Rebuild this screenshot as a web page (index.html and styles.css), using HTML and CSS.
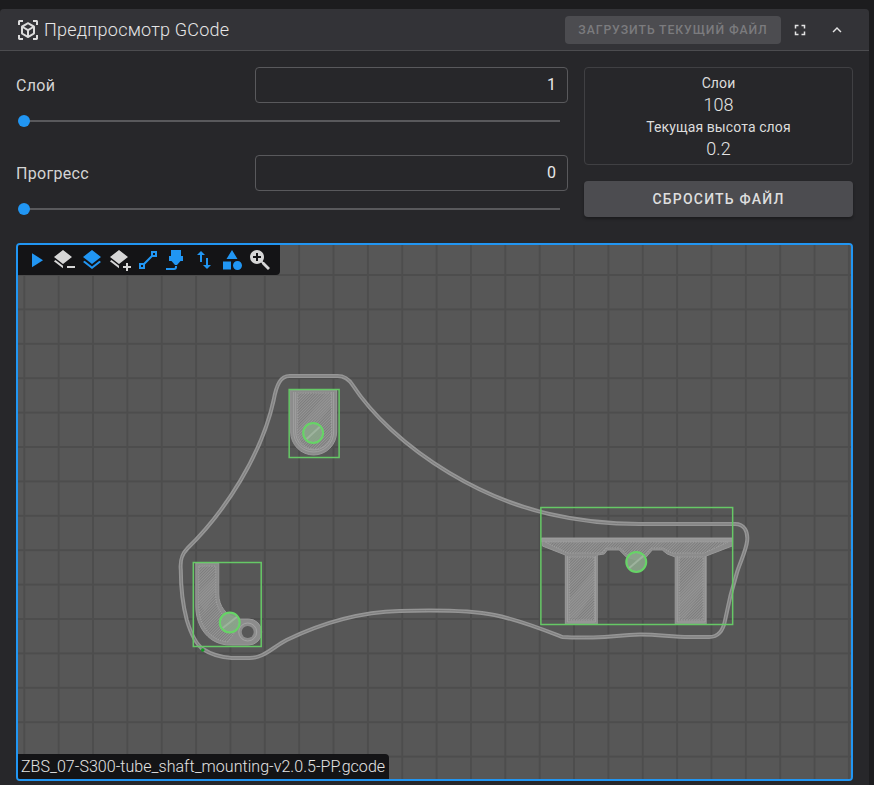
FILE: index.html
```html
<!DOCTYPE html>
<html lang="ru">
<head>
<meta charset="utf-8">
<title>Предпросмотр GCode</title>
<link rel="stylesheet" href="styles.css">
</head>
<body>
<section class="card">
  <header class="card-head">
    <svg class="head-icon" viewBox="0 0 24 24"><path d="M17,22V20H20V17H22V20.5C22,20.89 21.84,21.24 21.54,21.54C21.24,21.84 20.89,22 20.5,22H17M7,22H3.5C3.11,22 2.76,21.84 2.46,21.54C2.16,21.24 2,20.89 2,20.5V17H4V20H7V22M17,2H20.5C20.89,2 21.24,2.16 21.54,2.46C21.84,2.76 22,3.11 22,3.5V7H20V4H17V2M7,2V4H4V7H2V3.5C2,3.11 2.16,2.76 2.46,2.46C2.76,2.16 3.11,2 3.5,2H7M13,17.25L17,14.95V10.36L13,12.65V17.25M12,10.92L16,8.63L12,6.28L8,8.63L12,10.92M7,14.95L11,17.25V12.65L7,10.36V14.95M18.23,7.59C18.73,7.91 19,8.34 19,8.91V15.23C19,15.8 18.73,16.23 18.23,16.55L12.75,19.73C12.25,20.05 11.75,20.05 11.25,19.73L5.77,16.55C5.27,16.23 5,15.8 5,15.23V8.91C5,8.34 5.27,7.91 5.77,7.59L11.25,4.41C11.5,4.28 11.75,4.22 12,4.22C12.25,4.22 12.5,4.28 12.75,4.41L18.23,7.59Z"/></svg>
    <h1 class="card-title">Предпросмотр GCode</h1>
    <button class="btn-load" type="button">Загрузить текущий файл</button>
    <span class="head-action"><svg class="small-icon" viewBox="0 0 24 24"><path d="M5,5H10V7H7V10H5V5M14,5H19V10H17V7H14V5M17,14H19V19H14V17H17V14M10,17V19H5V14H7V17H10Z"/></svg></span>
    <span class="head-action"><svg class="small-icon" viewBox="0 0 24 24"><path d="M7.41,15.41L12,10.83L16.59,15.41L18,14L12,8L6,14L7.41,15.41Z"/></svg></span>
  </header>

  <div class="card-body">
    <div class="controls">
      <div class="sliders">
        <div class="slider-block">
          <div class="slider-top"><span class="slider-label">Слой</span><div class="field">1</div></div>
          <div class="track"><span class="thumb"></span></div>
        </div>
        <div class="slider-block">
          <div class="slider-top"><span class="slider-label">Прогресс</span><div class="field">0</div></div>
          <div class="track"><span class="thumb"></span></div>
        </div>
      </div>
      <div class="side">
        <div class="stats">
          <div class="stat-name">Слои</div>
          <div class="stat-value">108</div>
          <div class="stat-name">Текущая высота слоя</div>
          <div class="stat-value">0.2</div>
        </div>
        <button class="btn-reset" type="button">Сбросить файл</button>
      </div>
    </div>

    <div class="viewer">
      <svg class="canvas" viewBox="18 245 834 534" preserveAspectRatio="none">
        <defs>
          <pattern id="grid" patternUnits="userSpaceOnUse" x="24.3" y="275" width="34.4" height="34.4">
            <rect class="grid-bg" width="34.4" height="34.4"/>
            <rect class="grid-line" x="-1" width="2" height="34.4"/>
            <rect class="grid-line" x="33.4" width="2" height="34.4"/>
            <rect class="grid-line" y="-1" width="34.4" height="2"/>
            <rect class="grid-line" y="33.4" width="34.4" height="2"/>
          </pattern>
          <pattern id="hatch" patternUnits="userSpaceOnUse" width="2" height="2" patternTransform="rotate(-45)">
            <rect class="hatch-bg" width="2" height="2"/>
            <rect class="hatch-line" width="2" height="1"/>
          </pattern>
        </defs>
        <rect fill="url(#grid)" x="18" y="245" width="834" height="534"/>

        <path class="skirt" d="M290 376H338C345 376 349 379 353 385C372 414 405 446 450 473C485 494 515 506 550 514C585 522 610 524 640 524H736C745 524 749 531 748 541C747 550 742 560 738 572C733 588 729 604 726 620C724 631 719 637 710 637H690C670 637 650 633 630 635C610 637 580 638 563 637C545 630 520 620 495 615C470 610 435 610 400 611C360 612 320 624 287 640C272 648 264 658 250 658H232C218 657 209 653 203 649C196 644 190 630 187 620C183 605 181 585 181 570C180 560 182 554 188 548C225 512 262 455 274 400C277 384 281 376 290 376Z"/>
        <path class="skirt-inner" d="M290 376H338C345 376 349 379 353 385C372 414 405 446 450 473C485 494 515 506 550 514C585 522 610 524 640 524H736C745 524 749 531 748 541C747 550 742 560 738 572C733 588 729 604 726 620C724 631 719 637 710 637H690C670 637 650 633 630 635C610 637 580 638 563 637C545 630 520 620 495 615C470 610 435 610 400 611C360 612 320 624 287 640C272 648 264 658 250 658H232C218 657 209 653 203 649C196 644 190 630 187 620C183 605 181 585 181 570C180 560 182 554 188 548C225 512 262 455 274 400C277 384 281 376 290 376Z"/>

        <!-- top part -->
        <path class="part" d="M291 390H337V432A23 23 0 0 1 291 432Z"/>
        <path class="part-line" d="M294 392V432A20 20 0 0 0 334 432V392M296 392V432A18 18 0 0 0 332 432V392"/>
        <path class="part-fill" d="M298 393H332V432A17 17 0 0 1 298 432Z"/>
        <path class="sheen" d="M332 393V406L306 440H299V428L326 393Z"/>
        <rect class="bbox" x="289.500" y="389.500" width="50" height="68"/>
        <circle class="pin-glow" cx="313.500" cy="433" r="9.500"/>
        <circle class="pin" cx="313.500" cy="433" r="10"/>
        <path class="pin-slash" d="M307 439L320 427"/>

        <!-- left part -->
        <path class="part" d="M196 563H219V594C219 606 226 616 240 619H249A13 13 0 0 1 249 645H230C210 645 196 628 196 606Z"/>
        <path class="part-fill" d="M199 566H216V596C216 610 226 622 240 625L228 642C210 640 199 625 199 606Z"/>
        <path class="sheen" d="M216 575V592L205 612L200 604V590Z"/>
        <circle class="hole-ring" cx="248" cy="632" r="9"/>
        <circle class="hole" cx="248" cy="632" r="6"/>
        <rect class="bbox" x="193.500" y="562.500" width="68" height="84"/>
        <circle class="pin-glow" cx="230" cy="622.500" r="9.500"/>
        <circle class="pin" cx="230" cy="622.500" r="10"/>
        <path class="pin-slash" d="M223 628L237 617"/>
        <circle class="seam" cx="203" cy="650" r="1.800"/>

        <!-- right part -->
        <path class="part" d="M542 538H733V546L707 556V624H676V557L668 554L663 550H653L647 557L637 560L627 557L620 550H608L605 554L598 555V624H566V555L543 546Z"/>
        <path class="part-fill" d="M546 542H729L705 553H672L664 548H652L646 555H628L621 548H607L603 553H568Z"/>
        <path class="part-fill" d="M570 557H595V620H570Z"/>
        <path class="part-fill" d="M680 557H704V620H680Z"/>
        <path class="sheen" d="M595 568V590L578 618H570V600Z"/>
        <path class="sheen" d="M704 566V588L686 618H680V594Z"/>
        <path class="part-line" d="M542 539H733M542 541H733M568 556V622H596V556M678 556V622H706V556"/>
        <rect class="bbox" x="541.500" y="507.500" width="192" height="117"/>
        <circle class="pin-glow" cx="637" cy="562" r="9.500"/>
        <circle class="pin" cx="637" cy="562" r="10"/>
        <path class="pin-slash" d="M630 568L644 556"/>
      </svg>

      <div class="toolbar">
        <svg class="tool tool-blue" viewBox="0 0 24 24"><path d="M8,5.14V19.14L19,12.14L8,5.14Z"/></svg>
        <svg class="tool tool-grey" viewBox="0 0 24 24"><path d="M11 2L2 9L11 16L20 9ZM1.9 13.3L3.5 12L11 17.8V20.3ZM15 18H23V20H15Z"/></svg>
        <svg class="tool tool-blue" viewBox="0 0 24 24"><path d="M12,16L19.36,10.27L21,9L12,2L3,9L4.63,10.27M12,18.54L4.62,12.81L3,14.07L12,21.07L21,14.07L19.37,12.8L12,18.54Z"/></svg>
        <svg class="tool tool-grey" viewBox="0 0 24 24"><path d="M11 2L2 9L11 16L20 9ZM1.9 13.3L3.5 12L11 17.8V20.3ZM18 15H20V18H23V20H20V23H18V20H15V18H18Z"/></svg>
        <svg class="tool tool-blue" viewBox="0 0 24 24"><path fill-rule="evenodd" d="M15,3V7.59L7.59,15H3V21H9V16.42L16.42,9H21V3ZM17,5H19V7H17ZM5,17H7V19H5Z"/></svg>
        <svg class="tool tool-blue" viewBox="0 0 24 24"><path d="M7,2H17V8H19V13H16.5L13,17H11L7.5,13H5V8H7V2M10,22H2V20H10A1,1 0 0,0 11,19V18H13V19A3,3 0 0,1 10,22Z"/></svg>
        <svg class="tool tool-blue" viewBox="0 0 24 24"><path d="M9,3L5,7H8V14H10V7H13M16,17V10H14V17H11L15,21L19,17H16Z"/></svg>
        <svg class="tool tool-blue" viewBox="0 0 24 24"><path d="M11,13.5V21.5H3V13.5H11M12,2L17.5,11H6.5L12,2M17.5,13C20,13 22,15 22,17.5C22,20 20,22 17.5,22C15,22 13,20 13,17.5C13,15 15,13 17.5,13Z"/></svg>
        <svg class="tool tool-grey" viewBox="0 0 24 24"><path d="M9,2A7,7 0 0,1 16,9C16,10.57 15.5,12 14.61,13.19L15.41,14H16L22,20L20,22L14,16V15.41L13.19,14.61C12,15.5 10.57,16 9,16A7,7 0 0,1 2,9A7,7 0 0,1 9,2M8,5V8H5V10H8V13H10V10H13V8H10V5H8Z"/></svg>
      </div>
      <div class="filename">ZBS_07-S300-tube_shaft_mounting-v2.0.5-PP.gcode</div>
    </div>
  </div>
</section>
</body>
</html>
```
FILE: styles.css
```css
* { box-sizing: border-box; }
html, body { height: 100%; }
body {
  margin: 0;
  padding-top: 9px;
  overflow: hidden;
  background: #1c1c1e;
  font-family: Roboto, "Liberation Sans", sans-serif;
  color: #e0e0e0;
}
.card {
  width: 869px;
  height: 790px;
  background: #27272a;
  border-radius: 4px 4px 0 0;
}
.card-head {
  display: flex;
  align-items: center;
  height: 42px;
  padding: 0 14px 0 16px;
  background: #333337;
  border-bottom: 1px solid #4c4c4f;
  border-radius: 4px 4px 0 0;
}
.head-icon { width: 24px; height: 24px; fill: #dcdcdc; flex: none; }
.card-title {
  margin: 0 0 0 4px;
  flex: 1;
  font-size: 18px;
  font-weight: 300;
  letter-spacing: .225px;
  color: #e6e6e6;
  white-space: nowrap;
}
.btn-load {
  width: 216px;
  height: 28px;
  padding: 0;
  border: 0;
  border-radius: 4px;
  background: #4c4c50;
  color: #7b7b7e;
  font: 500 12.25px Roboto, sans-serif;
  letter-spacing: .9px;
  text-transform: uppercase;
}
.head-action {
  width: 37px;
  height: 28px;
  display: flex;
  align-items: center;
  justify-content: center;
}
.small-icon { width: 18px; height: 18px; fill: #e4e4e4; }
.card-body { padding: 16px 16px 0; }
.controls { display: flex; gap: 16px; }
.sliders { width: 552px; }
.slider-block { height: 88px; }
.slider-top { display: flex; align-items: center; justify-content: space-between; }
.slider-label { font-size: 16px; letter-spacing: .3px; color: #d4d4d4; }
.field {
  width: 313px;
  height: 36px;
  padding: 0 11px;
  border: 1px solid #59595c;
  border-radius: 4px;
  font-size: 16px;
  line-height: 34px;
  text-align: right;
  color: #e8e8e8;
}
.track {
  position: relative;
  height: 2px;
  margin: 17px 8px 0;
  background: #59595c;
}
.thumb {
  position: absolute;
  left: -6px;
  top: -5px;
  width: 12px;
  height: 12px;
  border-radius: 50%;
  background: #2196f3;
}
.side { width: 269px; }
.stats {
  height: 98px;
  padding: 4px 0;
  border: 1px solid #404043;
  border-radius: 4px;
  text-align: center;
}
.stat-name { font-size: 14px; line-height: 22px; letter-spacing: .1px; color: #dcdcdc; }
.stat-value { font-size: 18px; line-height: 22px; font-weight: 300; color: #e4e4e4; }
.btn-reset {
  width: 100%;
  height: 36px;
  margin-top: 16px;
  border: 0;
  border-radius: 4px;
  background: #4c4c50;
  box-shadow: 0 2px 3px rgba(0,0,0,.3);
  color: #dedede;
  font: 500 14px Roboto, sans-serif;
  letter-spacing: 1.2px;
  text-transform: uppercase;
}
.viewer {
  position: relative;
  width: 837px;
  height: 538px;
  border: 2px solid #2196f3;
  border-radius: 4px;
  overflow: hidden;
  background: #575757;
}
.canvas { display: block; width: 100%; height: 100%; }
.grid-bg { fill: #575757; }
.grid-line { fill: #4d4d4d; }
.hatch-bg { fill: #7c7c7c; }
.hatch-line { fill: #959595; }
.skirt { fill: none; stroke: #959595; stroke-width: 4; }
.skirt-inner { fill: none; stroke: #767676; stroke-width: .8; }
.part { fill: #8c8c8c; stroke: #9a9a9a; stroke-width: 1; }
.part-fill { fill: url(#hatch); stroke: #a8a8a8; stroke-width: .7; stroke-dasharray: 1.5 1; }
.part-line { fill: none; stroke: #a6a6a6; stroke-width: .8; }
.sheen { fill: #9c9c9c; opacity: .25; }
.bbox { fill: none; stroke: #66c866; stroke-width: 1.5; }
.pin { fill: none; stroke: #66d466; stroke-width: 2; }
.pin-glow { fill: #8aa58a; opacity: .9; stroke: #8acb8a; stroke-width: 1; }
.pin-slash { fill: none; stroke: #9db39d; stroke-width: 2; }
.hole { fill: #575757; }
.hole-ring { fill: #8c8c8c; stroke: #a4a4a4; stroke-width: 1; }
.seam { fill: #0f9a1f; }
.toolbar {
  position: absolute;
  left: 0;
  top: 0;
  width: 262px;
  height: 30px;
  padding: 3px 7px 0 6px;
  display: flex;
  gap: 4px;
  background: #141416;
  border-radius: 0 0 4px 0;
}
.tool { width: 24px; height: 24px; flex: none; }
.tool-blue { fill: #2196f3; }
.tool-grey { fill: #d6d6d6; }
.filename {
  position: absolute;
  left: 0;
  bottom: 0;
  padding: 0 4px 0 3px;
  height: 25px;
  line-height: 26px;
  font-size: 16px;
  font-weight: 300;
  letter-spacing: .04px;
  color: #e4e4e4;
  background: #141416;
  border-radius: 0 4px 0 0;
  white-space: nowrap;
}
```
